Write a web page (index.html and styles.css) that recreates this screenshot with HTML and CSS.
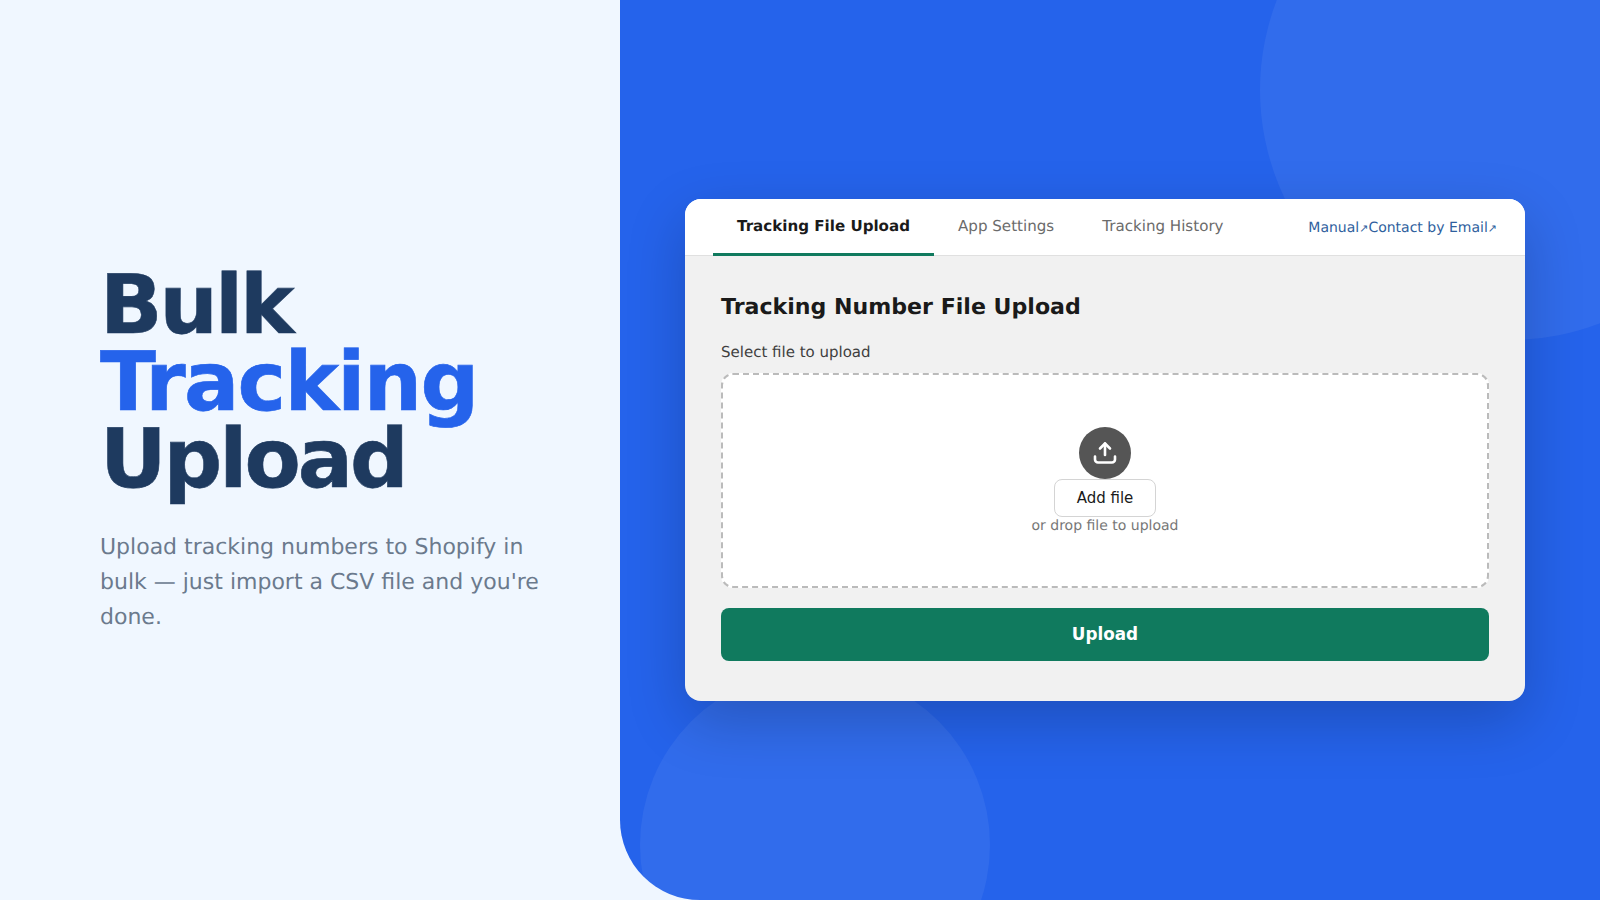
FILE: index.html
```html
<!DOCTYPE html>
<html lang="en">
<head>
<meta charset="utf-8">
<title>Bulk Tracking Upload</title>
<link rel="stylesheet" href="styles.css">
</head>
<body>
<main class="page">
  <section class="intro">
    <h1 class="headline">Bulk<br><span class="accent">Tracking</span><br>Upload</h1>
    <p class="lede">Upload tracking numbers to Shopify in bulk — just import a CSV file and you're done.</p>
  </section>
  <section class="stage">
    <div class="blob blob-top"></div>
    <div class="blob blob-bottom"></div>
    <div class="card">
      <header class="tabbar">
        <nav class="tabs">
          <a class="tab tab-active">Tracking File Upload</a>
          <a class="tab">App Settings</a>
          <a class="tab">Tracking History</a>
        </nav>
        <div class="links">
          <a class="link">Manual<span class="arrow">↗</span></a>
          <a class="link">Contact by Email<span class="arrow">↗</span></a>
        </div>
      </header>
      <div class="panel">
        <h2 class="panel-title">Tracking Number File Upload</h2>
        <div class="field-label">Select file to upload</div>
        <div class="dropzone">
          <div class="upload-badge">
            <svg width="24" height="24" viewBox="0 0 24 24" fill="none" stroke="#fff" stroke-width="2.6" stroke-linecap="round" stroke-linejoin="round">
              <path d="M12 14V2.500"/>
              <path d="M7 7.500l5-5 5 5"/>
              <path d="M2 15.500v3a3 3 0 0 0 3 3h14a3 3 0 0 0 3-3v-3"/>
            </svg>
          </div>
          <button class="add-file" type="button">Add file</button>
          <div class="drop-hint">or drop file to upload</div>
        </div>
        <button class="submit" type="button">Upload</button>
      </div>
    </div>
  </section>
</main>
</body>
</html>
```
FILE: styles.css
```css
* { box-sizing: border-box; }
html, body { margin: 0; height: 100%; }
body { font-family: "DejaVu Sans", sans-serif; background: #eff6ff; overflow: hidden; text-rendering: geometricPrecision; }
.page { display: flex; height: 900px; width: 1600px; }
.intro { width: 620px; flex: none; padding: 0 60px 0 100px; display: flex; flex-direction: column; justify-content: center; background: #f0f7ff; }
.headline { margin: 0 0 31px; padding-top: 1px; font-size: 82px; line-height: 77px; font-weight: 800; color: #1e3a5f; letter-spacing: -3px; -webkit-text-stroke: 0.6px currentColor; }
.accent { color: #2563eb; letter-spacing: -1.700px; }
.lede { margin: 0; padding-top: 1px; font-size: 22px; line-height: 35px; color: #6b7a8d; }
.stage { position: relative; flex: 1; background: #2563eb; border-bottom-left-radius: 80px; overflow: hidden; display: flex; align-items: center; justify-content: flex-start; padding-left: 65px; }
.blob { position: absolute; border-radius: 50%; background: rgba(255,255,255,.06); }
.blob-top { width: 500px; height: 500px; top: -160px; right: -160px; }
.blob-bottom { width: 350px; height: 350px; bottom: -120px; left: 20px; }
.card { position: relative; width: 840px; height: 502px; border-radius: 16px; background: #f1f1f1; overflow: hidden; box-shadow: 0 20px 60px rgba(0,0,0,.2); }
.tabbar { height: 57px; background: #fff; border-bottom: 1px solid #e0e0e0; padding: 0 28px; display: flex; justify-content: space-between; align-items: flex-start; }
.tabs { display: flex; }
.tab { display: block; height: 57px; padding: 18px 24px 0; font-size: 15.100px; line-height: 18px; color: #6b6b6b; border-bottom: 3px solid transparent; }
.tab-active { font-weight: 700; color: #1a1a1a; border-bottom-color: #107a5e; }
.links { display: flex; padding-top: 21px; }
.link { font-size: 14px; line-height: 17px; color: #2f5f9e; }
.arrow { font-size: 11px; }
.panel { padding: 37px 36px 40px; }
.panel-title { margin: 0 0 22px; font-size: 22.100px; line-height: 28px; font-weight: 700; color: #1a1a1a; }
.field-label { font-size: 15px; line-height: 19px; color: #3f3f3f; margin-bottom: 11px; }
.dropzone { height: 215px; background: #fff; border: 2px dashed #bbb; border-radius: 12px; display: flex; flex-direction: column; align-items: center; justify-content: center; padding-bottom: 2px; }
.upload-badge { width: 52px; height: 52px; border-radius: 50%; background: #555; display: flex; align-items: center; justify-content: center; }
.add-file { width: 102px; height: 38px; border: 1px solid #d4d4d4; border-radius: 8px; background: #fff; font: 15px "DejaVu Sans", sans-serif; color: #1a1a1a; padding: 0; }
.drop-hint { padding-top: 1px; font-size: 14px; line-height: 16px; color: #777; margin-bottom: -1px; }
.submit { display: block; width: 100%; height: 53px; margin-top: 20px; padding-bottom: 2px; border: 0; border-radius: 8px; background: #107a5e; color: #fff; font: 700 16.800px "DejaVu Sans", sans-serif; }
```
